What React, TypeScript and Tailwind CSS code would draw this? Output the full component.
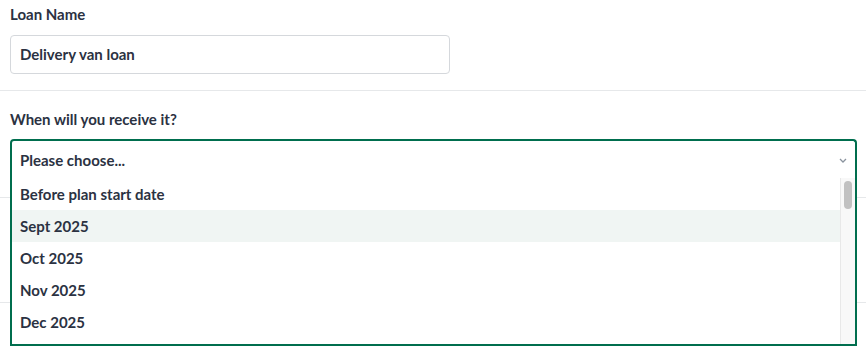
import React from "react";

const options = ["Before plan start date", "Sept 2025", "Oct 2025", "Nov 2025", "Dec 2025"];

export default function App() {
  return (
    <div className="w-[866px] h-[347px] overflow-hidden bg-white text-[#2b3242] font-['Lato',sans-serif] font-bold text-[15px]">
      <div className="pl-[10px] pt-[5px] pb-[16px] border-b border-[#e6e8ea]">
        <div className="h-[18px] leading-[18px]">Loan Name</div>
        <div className="mt-[12px] w-[440px] h-[39px] border border-[#d5d8dc] rounded-[4px] flex items-center px-[9px]">
          Delivery van loan
        </div>
      </div>
      <div className="pt-[19px] pb-[19px] border-b border-[#e6e8ea]">
        <div className="pl-[10px] h-[18px] leading-[18px]">When will you receive it?</div>
        <div className="relative mt-[11px] ml-[10px] w-[847px]">
          <div className="h-[39px] border-2 border-b-0 border-[#006e4e] rounded-t-[4px] flex items-center justify-between pl-[8px] pr-[8px]">
            <span className="mt-[2px]">Please choose...</span>
            <svg width="8" height="5" viewBox="0 0 8 5" className="mt-[1px]">
              <path d="M1 1 L4 4 L7 1" fill="none" stroke="#8a939e" strokeWidth="1.3" />
            </svg>
          </div>
          <div className="absolute left-0 top-full w-[847px] h-[168px] bg-white border-2 border-t-0 border-[#006e4e] flex overflow-hidden z-10">
            <div className="flex-1 flex flex-col">
              {options.map((o, i) => (
                <div
                  key={o}
                  className={
                    i === 1
                      ? "h-[32px] shrink-0 flex items-center pl-[8px] bg-[#f0f5f3]"
                      : "h-[32px] shrink-0 flex items-center pl-[8px]"
                  }
                >
                  {o}
                </div>
              ))}
            </div>
            <div className="w-[15px] h-full bg-[#f8f8f8] border-l border-[#e8e8e8] pt-[3px] flex justify-center">
              <div className="w-[8px] h-[28px] rounded-full bg-[#c1c1c1]" />
            </div>
          </div>
        </div>
      </div>
      <div className="h-[105px] border-b border-[#e6e8ea]" />
    </div>
  );
}
